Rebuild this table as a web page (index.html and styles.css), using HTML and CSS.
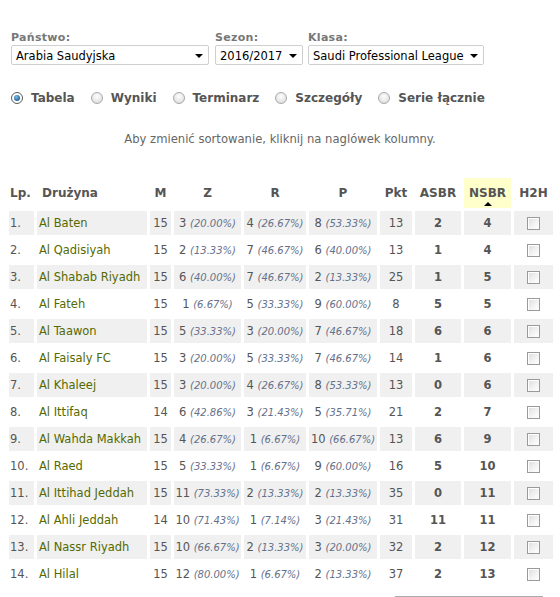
FILE: index.html
```html
<!DOCTYPE html>
<html lang="pl">
<head>
<meta charset="utf-8">
<link rel="stylesheet" href="styles.css">
</head>
<body>
<div class="page">
  <div class="filters">
    <div class="field f-country">
      <div class="label">Państwo:</div>
      <div class="select"><span>Arabia Saudyjska</span><i class="arrow"></i></div>
    </div>
    <div class="field f-season">
      <div class="label">Sezon:</div>
      <div class="select"><span>2016/2017</span><i class="arrow"></i></div>
    </div>
    <div class="field f-league">
      <div class="label">Klasa:</div>
      <div class="select"><span>Saudi Professional League</span><i class="arrow"></i></div>
    </div>
  </div>

  <div class="tabs">
    <label class="tab"><span class="radio checked"></span>Tabela</label>
    <label class="tab"><span class="radio"></span>Wyniki</label>
    <label class="tab"><span class="radio"></span>Terminarz</label>
    <label class="tab"><span class="radio"></span>Szczegóły</label>
    <label class="tab"><span class="radio"></span>Serie łącznie</label>
  </div>

  <p class="hint">Aby zmienić sortowanie, kliknij na naglówek kolumny.</p>

  <table class="standings">
    <colgroup>
      <col class="c-lp"><col class="c-team"><col class="c-m"><col class="c-z"><col class="c-r"><col class="c-p"><col class="c-pkt"><col class="c-asbr"><col class="c-nsbr"><col class="c-h2h">
    </colgroup>
    <thead>
      <tr>
        <th class="t-lp">Lp.</th>
        <th class="t-team">Drużyna</th>
        <th>M</th>
        <th>Z</th>
        <th>R</th>
        <th>P</th>
        <th>Pkt</th>
        <th>ASBR</th>
        <th class="sorted">NSBR<i class="sort-up"></i></th>
        <th>H2H</th>
      </tr>
    </thead>
    <tbody>
      <tr class="odd"><td class="lp">1.</td><td class="team">Al Baten</td><td>15</td><td>3 <em>(20.00%)</em></td><td>4 <em>(26.67%)</em></td><td>8 <em>(53.33%)</em></td><td>13</td><td class="b">2</td><td class="b">4</td><td><span class="check"></span></td></tr>
      <tr><td class="lp">2.</td><td class="team">Al Qadisiyah</td><td>15</td><td>2 <em>(13.33%)</em></td><td>7 <em>(46.67%)</em></td><td>6 <em>(40.00%)</em></td><td>13</td><td class="b">1</td><td class="b">4</td><td><span class="check"></span></td></tr>
      <tr class="odd"><td class="lp">3.</td><td class="team">Al Shabab Riyadh</td><td>15</td><td>6 <em>(40.00%)</em></td><td>7 <em>(46.67%)</em></td><td>2 <em>(13.33%)</em></td><td>25</td><td class="b">1</td><td class="b">5</td><td><span class="check"></span></td></tr>
      <tr><td class="lp">4.</td><td class="team">Al Fateh</td><td>15</td><td>1 <em>(6.67%)</em></td><td>5 <em>(33.33%)</em></td><td>9 <em>(60.00%)</em></td><td>8</td><td class="b">5</td><td class="b">5</td><td><span class="check"></span></td></tr>
      <tr class="odd"><td class="lp">5.</td><td class="team">Al Taawon</td><td>15</td><td>5 <em>(33.33%)</em></td><td>3 <em>(20.00%)</em></td><td>7 <em>(46.67%)</em></td><td>18</td><td class="b">6</td><td class="b">6</td><td><span class="check"></span></td></tr>
      <tr><td class="lp">6.</td><td class="team">Al Faisaly FC</td><td>15</td><td>3 <em>(20.00%)</em></td><td>5 <em>(33.33%)</em></td><td>7 <em>(46.67%)</em></td><td>14</td><td class="b">1</td><td class="b">6</td><td><span class="check"></span></td></tr>
      <tr class="odd"><td class="lp">7.</td><td class="team">Al Khaleej</td><td>15</td><td>3 <em>(20.00%)</em></td><td>4 <em>(26.67%)</em></td><td>8 <em>(53.33%)</em></td><td>13</td><td class="b">0</td><td class="b">6</td><td><span class="check"></span></td></tr>
      <tr><td class="lp">8.</td><td class="team">Al Ittifaq</td><td>14</td><td>6 <em>(42.86%)</em></td><td>3 <em>(21.43%)</em></td><td>5 <em>(35.71%)</em></td><td>21</td><td class="b">2</td><td class="b">7</td><td><span class="check"></span></td></tr>
      <tr class="odd"><td class="lp">9.</td><td class="team">Al Wahda Makkah</td><td>15</td><td>4 <em>(26.67%)</em></td><td>1 <em>(6.67%)</em></td><td>10 <em>(66.67%)</em></td><td>13</td><td class="b">6</td><td class="b">9</td><td><span class="check"></span></td></tr>
      <tr><td class="lp">10.</td><td class="team">Al Raed</td><td>15</td><td>5 <em>(33.33%)</em></td><td>1 <em>(6.67%)</em></td><td>9 <em>(60.00%)</em></td><td>16</td><td class="b">5</td><td class="b">10</td><td><span class="check"></span></td></tr>
      <tr class="odd"><td class="lp">11.</td><td class="team">Al Ittihad Jeddah</td><td>15</td><td>11 <em>(73.33%)</em></td><td>2 <em>(13.33%)</em></td><td>2 <em>(13.33%)</em></td><td>35</td><td class="b">0</td><td class="b">11</td><td><span class="check"></span></td></tr>
      <tr><td class="lp">12.</td><td class="team">Al Ahli Jeddah</td><td>14</td><td>10 <em>(71.43%)</em></td><td>1 <em>(7.14%)</em></td><td>3 <em>(21.43%)</em></td><td>31</td><td class="b">11</td><td class="b">11</td><td><span class="check"></span></td></tr>
      <tr class="odd"><td class="lp">13.</td><td class="team">Al Nassr Riyadh</td><td>15</td><td>10 <em>(66.67%)</em></td><td>2 <em>(13.33%)</em></td><td>3 <em>(20.00%)</em></td><td>32</td><td class="b">2</td><td class="b">12</td><td><span class="check"></span></td></tr>
      <tr><td class="lp">14.</td><td class="team">Al Hilal</td><td>15</td><td>12 <em>(80.00%)</em></td><td>1 <em>(6.67%)</em></td><td>2 <em>(13.33%)</em></td><td>37</td><td class="b">2</td><td class="b">13</td><td><span class="check"></span></td></tr>
    </tbody>
  </table>
  <div class="bottom-rule"></div>
</div>
</body>
</html>
```

FILE: styles.css
```css
* { box-sizing: border-box; }
html, body { margin: 0; padding: 0; background: #fff; }
body {
  font-family: "DejaVu Sans", Verdana, sans-serif;
  color: #555;
}
.page { width: 560px; padding-top: 32px; }

.filters { display: flex; padding-left: 11px; }
.field { display: flex; flex-direction: column; }
.f-country { width: 204px; }
.f-season { width: 93px; }
.label {
  font-size: 11px;
  font-weight: bold;
  color: #777;
  height: 13px;
  line-height: 12px;
  letter-spacing: 0.3px;
}
.select {
  display: flex;
  align-items: center;
  justify-content: space-between;
  height: 20px;
  border: 1px solid #cfcfcf;
  border-radius: 2px;
  padding: 1px 5px 0 4px;
  font-size: 11.5px;
  color: #000;
  background: #fff;
}
.f-country .select { width: 198px; }
.f-season .select { width: 88px; }
.f-league .select { width: 176px; }
.arrow {
  width: 0; height: 0;
  border-left: 4px solid transparent;
  border-right: 4px solid transparent;
  border-top: 4px solid #000;
}

.tabs {
  display: flex;
  align-items: center;
  gap: 16px;
  padding-left: 11px;
  margin-top: 25px;
  height: 16px;
}
.tab {
  display: flex;
  align-items: center;
  font-size: 12px;
  font-weight: bold;
  color: #555;
}
.radio {
  width: 12px; height: 12px;
  border-radius: 50%;
  border: 1px solid #a8a8a8;
  background: radial-gradient(circle at 50% 35%, #fdfdfd 0%, #e4e4e4 70%, #d0d0d0 100%);
  margin-right: 8px;
  position: relative;
}
.radio.checked {
  border-color: #5a5a5a;
  background: #fff;
}
.radio.checked::after {
  content: "";
  position: absolute;
  left: 2px; top: 2px;
  width: 6px; height: 6px;
  border-radius: 50%;
  background: radial-gradient(circle at 40% 35%, #7ec0ea 0%, #2a6fa8 60%, #1a4a78 100%);
}

.hint {
  margin: 26px 0 0;
  text-align: center;
  font-size: 11.6px;
  color: #666;
  line-height: 14px;
}

.standings {
  margin: 29px 0 0 6px;
  border-collapse: separate;
  border-spacing: 3px;
  table-layout: fixed;
  width: 550px;
  font-size: 11.5px;
}
.c-lp { width: 25px; }
.c-team { width: 110px; }
.c-m { width: 21px; }
.c-z { width: 67px; }
.c-r { width: 62px; }
.c-p { width: 68px; }
.c-pkt { width: 32px; }
.c-asbr { width: 46px; }
.c-nsbr { width: 47px; }
.c-h2h { width: 39px; }

.standings th {
  height: 30px;
  padding: 0;
  font-weight: bold;
  color: #555;
  text-align: center;
  font-size: 12px;
  position: relative;
}
.standings th.t-lp { text-align: left; padding-left: 1px; }
.standings th.t-team { text-align: left; padding-left: 5px; }
.standings th.sorted { background: #ffffcc; }
.sort-up {
  position: absolute;
  left: 50%;
  bottom: 2px;
  margin-left: -4px;
  width: 0; height: 0;
  border-left: 4px solid transparent;
  border-right: 4px solid transparent;
  border-bottom: 4px solid #000;
}

.standings td {
  height: 24px;
  padding: 0;
  text-align: center;
  white-space: nowrap;
  color: #555;
}
.standings tr.odd td { background: #f0f0f0; }
.standings td.lp { text-align: left; padding-left: 1px; }
.standings td.team { text-align: left; padding-left: 2px; color: #546a00; }
.standings td.b { font-weight: bold; }
.standings em {
  font-size: 10px;
  font-style: italic;
  color: #66708a;
}
.check {
  display: inline-block;
  vertical-align: middle;
  width: 13px; height: 13px;
  border: 1px solid #9a9a9a;
  background: linear-gradient(135deg, #dcdcdc 0%, #f4f4f4 60%, #ffffff 100%);
  box-shadow: inset 1px 1px 0 #fff;
}

.bottom-rule {
  margin: 7px 0 0 395px;
  width: 148px;
  height: 1px;
  background: #aaa;
}
```
